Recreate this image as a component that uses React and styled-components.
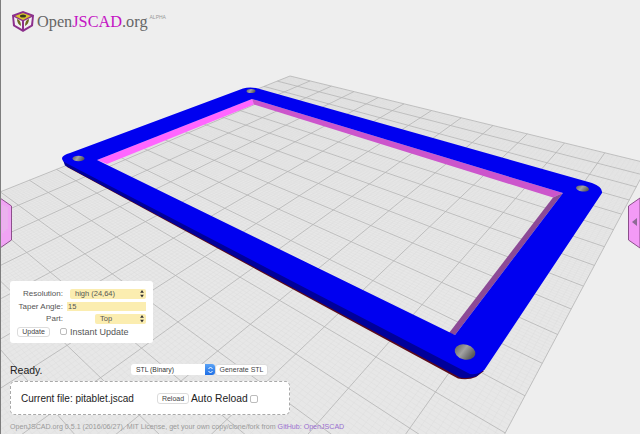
import React from "react";
import styled, { createGlobalStyle } from "styled-components";

const GlobalStyle = createGlobalStyle`
  html, body {
    margin: 0;
    padding: 0;
    overflow: hidden;
    background: #eeeeee;
  }
`;

const Viewer = styled.div`
  position: relative;
  width: 640px;
  height: 434px;
  overflow: hidden;
  background: #eeeeee;
  border-left: 1px solid #7d7d7d;
  box-sizing: border-box;
  font-family: "Liberation Sans", Arial, sans-serif;
  color: #222;
`;

const Scene = styled.svg`
  position: absolute;
  left: -1px;
  top: 0;
`;

const Logo = styled.div`
  position: absolute;
  left: 11px;
  top: 11px;
  display: flex;
  align-items: flex-start;
  gap: 3px;
`;

const LogoText = styled.div`
  font-family: "Liberation Serif", "Times New Roman", serif;
  font-size: 16.3px;
  line-height: 20px;
  margin-top: 1px;
  color: #666;
  white-space: nowrap;
  b {
    font-weight: normal;
    color: #c414c4;
  }
`;

const Alpha = styled.span`
  font-size: 5px;
  color: #999;
  line-height: 8px;
  margin-top: 2px;
  margin-left: -1px;
`;

const Params = styled.div`
  position: absolute;
  left: 9px;
  top: 281px;
  width: 143px;
  height: 62px;
  box-sizing: border-box;
  background: #fff;
  border-radius: 3px;
  padding: 8px 7px 0 7px;
  display: flex;
  flex-direction: column;
  gap: 3px;
  font-size: 8px;
  color: #555;
`;

const ParamRow = styled.div`
  display: grid;
  grid-template-columns: 46px 1fr;
  align-items: center;
  column-gap: 2px;
  height: 9.5px;
`;

const ParamLabel = styled.label`
  text-align: right;
  white-space: nowrap;
`;

const FieldCell = styled.div`
  display: flex;
  justify-content: flex-end;
`;

const YellowSelect = styled.div`
  position: relative;
  width: ${(p) => p.$w}px;
  height: 9.5px;
  box-sizing: border-box;
  padding-left: ${(p) => p.$pad}px;
  background: #fbedb0;
  border-radius: 2px;
  font-size: 7.5px;
  line-height: 9.5px;
  color: #555;
`;

const Updown = styled.svg`
  position: absolute;
  right: 2px;
  top: 1px;
`;

const TaperInput = styled.div`
  width: 79px;
  height: 9.5px;
  background: #fbedb0;
  font-size: 7.5px;
  line-height: 9.5px;
  padding-left: 1px;
  box-sizing: border-box;
  color: #555;
`;

const UpdateRow = styled.div`
  display: flex;
  align-items: center;
  font-size: 9px;
  color: #555;
`;

const Btn = styled.button`
  width: ${(p) => p.$w}px;
  height: ${(p) => p.$h}px;
  flex: none;
  box-sizing: border-box;
  padding: 0;
  background: #fff;
  border: 1px solid #dcdcdc;
  border-radius: 3px;
  font-family: inherit;
  font-size: 7px;
  color: #444;
  white-space: nowrap;
`;

const Check = styled.span`
  display: inline-block;
  flex: none;
  width: ${(p) => p.$s}px;
  height: ${(p) => p.$s}px;
  box-sizing: border-box;
  background: #fff;
  border: 1px solid #bcbcbc;
  border-radius: 2px;
  margin: ${(p) => p.$m};
`;

const StatusRow = styled.div`
  position: absolute;
  left: 9px;
  top: 363px;
  display: flex;
  align-items: center;
  height: 13px;
`;

const Ready = styled.div`
  width: 121px;
  font-size: 10.5px;
  color: #222;
`;

const Format = styled.div`
  position: relative;
  width: 84px;
  height: 11px;
  box-sizing: border-box;
  padding-left: 5px;
  background: #fff;
  border-radius: 3px;
  font-size: 6.8px;
  line-height: 11px;
  color: #333;
`;

const FormatArrow = styled.span`
  position: absolute;
  right: 0;
  top: 0;
  width: 10px;
  height: 11px;
  background: linear-gradient(#5aa2f5, #1e6fe6);
  border-radius: 0 3px 3px 0;
  display: flex;
  align-items: center;
  justify-content: center;
`;

const FileBox = styled.div`
  position: absolute;
  left: 9px;
  top: 381px;
  width: 280px;
  height: 34px;
  box-sizing: border-box;
  background: #fff;
  border: 1px dashed #a9a9a9;
  border-radius: 5px;
  padding-left: 10px;
  display: flex;
  align-items: center;
  font-size: 10.3px;
  color: #222;
`;

const FileName = styled.span`
  width: 136px;
  flex: none;
  font-size: 10px;
  white-space: nowrap;
`;

const AutoLabel = styled.span`
  margin-left: 2px;
`;

const Footer = styled.div`
  position: absolute;
  left: 9px;
  top: 422px;
  font-size: 7.1px;
  line-height: 10px;
  color: #9a9a9a;
  white-space: nowrap;
  a {
    color: #9a6fd0;
    text-decoration: none;
  }
`;

const SideTab = styled.svg`
  position: absolute;
  top: 197px;
  ${(p) => (p.$right ? "right: 0;" : "left: -1px;")}
`;

// floor homography, fitted on the two vanishing points of the plate
const VP1 = [-382, -88];
const VP2 = [805, -130];
const ORIGIN = [290, 76];
const A = -0.029;
const B = -0.024;
const CELLS_U = 12;
const CELLS_V = 22;

const project = (u, v) => {
  const w = 1 + u * A + v * B;
  const x = (ORIGIN[0] + u * A * VP1[0] + v * B * VP2[0]) / w;
  const y = (ORIGIN[1] + u * A * VP1[1] + v * B * VP2[1]) / w;
  return [x.toFixed(1), y.toFixed(1)];
};

const gridPath = (major) => {
  let d = "";
  const step = major ? 1 : 0.1;
  for (let i = 0; i * step <= CELLS_U + 0.001; i++) {
    if (!major && i % 10 === 0) continue;
    const a = project(i * step, 0);
    const b = project(i * step, CELLS_V);
    d += `M${a}L${b}`;
  }
  for (let i = 0; i * step <= CELLS_V + 0.001; i++) {
    if (!major && i % 10 === 0) continue;
    const a = project(0, i * step);
    const b = project(CELLS_U, i * step);
    d += `M${a}L${b}`;
  }
  return d;
};

const floor = [project(0, 0), project(CELLS_U, 0), project(CELLS_U, CELLS_V), project(0, CELLS_V)]
  .map((p) => p.join(","))
  .join(" ");

const plateTop =
  "M62 158Q63 155 70 153L243 88.500Q250 86.500 258 88.500L592 183Q603 187 602 193L485 369Q480 375 470 374L66 163Q62 161 62 158Z" +
  "M97 160L252 99L563 193L455 335Z";

const Screw = ({ cx, cy, rx, ry, rot = 0 }) => (
  <ellipse cx={cx} cy={cy} rx={rx} ry={ry} fill="url(#screw)" transform={`rotate(${rot} ${cx} ${cy})`} />
);

const Plate = () => (
  <g>
    <path d="M64 162L67 167L458 378.500Q468 380.500 476 377L484 371L470 370L66 160Z" fill="#5a0a1c" />
    <path d="M63 160L65 165.500L460 377.500Q469 379 477 376L485 369L470 372L66 160Z" fill="#00009a" />
    <polygon points="97,160 252,99 254,104.500 107,164" fill="#ff66ff" />
    <polygon points="252,99 563,193 553,197.500 254,104.500" fill="#cc55cc" />
    <polygon points="563,193 455,335 449,333 553,197.500" fill="#8c4a96" />
    <path d={plateTop} fill="#0000f0" fillRule="evenodd" />
    <Screw cx={251} cy={91} rx={4.500} ry={2} />
    <Screw cx={78.500} cy={158.500} rx={6} ry={2.800} />
    <Screw cx={582.500} cy={188.500} rx={6.500} ry={3} rot={8} />
    <Screw cx={465} cy={352} rx={10.500} ry={7.500} rot={15} />
  </g>
);

const Updowns = () => (
  <Updown width="4" height="7.500" viewBox="0 0 4 8">
    <path d="M2 0L4 3H0ZM2 8L0 5H4Z" fill="#333" />
  </Updown>
);

const CubeLogo = () => (
  <svg width="22" height="21" viewBox="0 0 22 21">
    <polygon points="11,0 22,4 21,15 11,21 1,15 0,4" fill="#8c2f8c" />
    <polygon points="11,2 19,5 11,9 3,5" fill="#d9c62e" />
    <ellipse cx="11" cy="5" rx="3" ry="1.500" fill="#3a3a20" />
    <polygon points="2,6 10,10 10,18 3,14" fill="#f3eef3" />
    <polygon points="20,6 12,10 12,18 19,14" fill="#f3eef3" />
    <path d="M5 8Q9 9 9 15Q5 13 5 8Z" fill="#6f6b20" />
    <path d="M17 8Q13 9 13 15Q17 13 17 8Z" fill="#6f6b20" />
  </svg>
);

const App = () => (
  <>
    <GlobalStyle />
    <Viewer>
      <Scene width="640" height="434" viewBox="0 0 640 434">
        <defs>
          <linearGradient id="screw" x1="0" y1="0" x2="1" y2="0.300">
            <stop offset="0" stopColor="#5c5c5c" />
            <stop offset="0.500" stopColor="#a2a2a2" />
            <stop offset="1" stopColor="#5a5a5a" />
          </linearGradient>
        </defs>
        <polygon points={floor} fill="#e7e7e7" />
        <path d={gridPath(false)} stroke="#dcdcdc" strokeWidth="0.400" fill="none" />
        <path d={gridPath(true)} stroke="#b4b4b4" strokeWidth="0.800" fill="none" />
        <Plate />
      </Scene>

      <Logo>
        <CubeLogo />
        <LogoText>
          Open<b>JSCAD</b>.org
        </LogoText>
        <Alpha>ALPHA</Alpha>
      </Logo>

      <SideTab width="12" height="52" viewBox="0 0 12 52">
        <polygon points="0,1 11.500,9 11.500,43 0,51" fill="#f0a4f4" stroke="#8c4f8c" strokeWidth="1" />
        <path d="M3 8V36M5 9V34M7 10V32" stroke="#e2c6e6" strokeWidth="0.800" />
      </SideTab>
      <SideTab $right width="12" height="52" viewBox="0 0 12 52">
        <polygon points="12,1 0.500,9 0.500,43 12,51" fill="#f39af6" stroke="#8c4f8c" strokeWidth="1" />
        <polygon points="4,25 9,21 9,29" fill="#8d6a96" />
      </SideTab>

      <Params>
        <ParamRow>
          <ParamLabel>Resolution:</ParamLabel>
          <FieldCell>
            <YellowSelect $w={76} $pad={5}>
              high (24,64)
              <Updowns />
            </YellowSelect>
          </FieldCell>
        </ParamRow>
        <ParamRow>
          <ParamLabel>Taper Angle:</ParamLabel>
          <FieldCell>
            <TaperInput>15</TaperInput>
          </FieldCell>
        </ParamRow>
        <ParamRow>
          <ParamLabel>Part:</ParamLabel>
          <FieldCell>
            <YellowSelect $w={51} $pad={5}>
              Top
              <Updowns />
            </YellowSelect>
          </FieldCell>
        </ParamRow>
        <UpdateRow>
          <Btn $w={33} $h={10}>Update</Btn>
          <Check $s={7} $m="0 3px 0 10px" />
          Instant Update
        </UpdateRow>
      </Params>

      <StatusRow>
        <Ready>Ready.</Ready>
        <Format>
          STL (Binary)
          <FormatArrow>
            <svg width="5" height="8" viewBox="0 0 5 8">
              <path d="M0.500 3L2.500 1L4.500 3M0.500 5L2.500 7L4.500 5" stroke="#fff" fill="none" />
            </svg>
          </FormatArrow>
        </Format>
        <Btn $w={53} $h={12}>Generate STL</Btn>
      </StatusRow>

      <FileBox>
        <FileName>Current file: pitablet.jscad</FileName>
        <Btn $w={32} $h={11}>Reload</Btn>
        <AutoLabel>Auto Reload</AutoLabel>
        <Check $s={8} $m="1px 0 0 2px" />
      </FileBox>

      <Footer>
        OpenJSCAD.org 0.5.1 (2016/06/27), MIT License, get your own copy/clone/fork from <a href="#gh">GitHub: OpenJSCAD</a>
      </Footer>
    </Viewer>
  </>
);

export default App;
